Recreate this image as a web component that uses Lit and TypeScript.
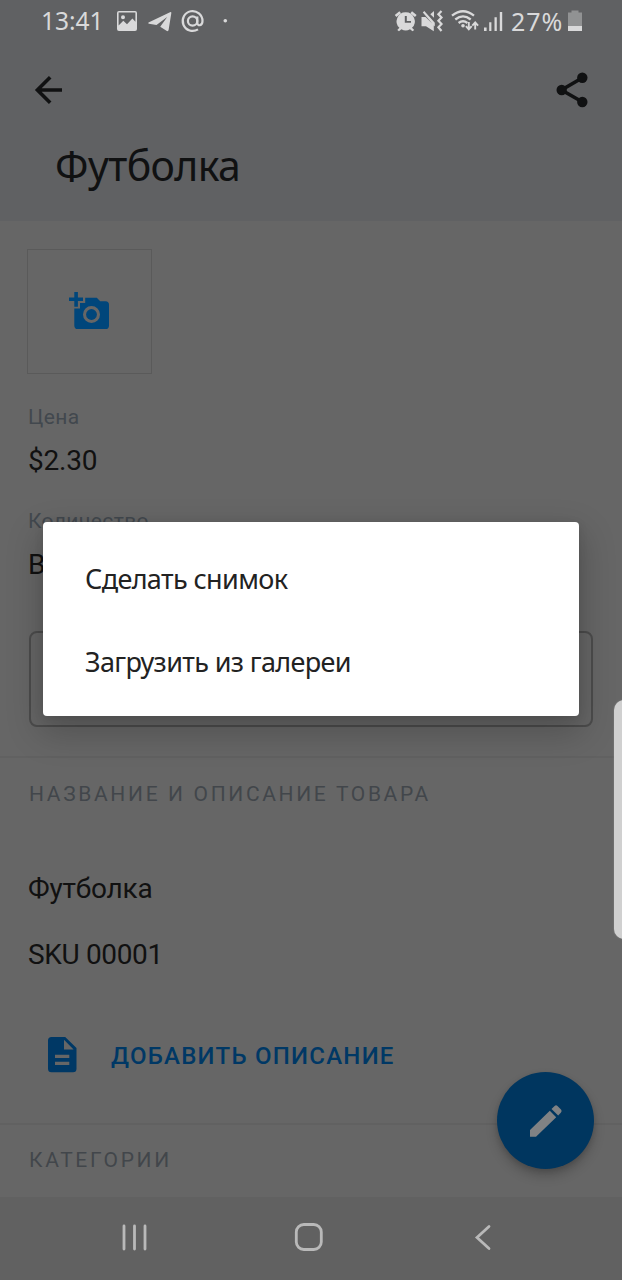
import { LitElement, html, css } from "lit";
import { customElement } from "lit/decorators.js";

@customElement("status-bar")
class StatusBar extends LitElement {
  static styles = css`
    :host { display: block; height: 44px; color: #d9d9da; }
    .bar { display: flex; justify-content: space-between; height: 44px; }
    .side { display: flex; align-items: center; height: 44px; }
    .left { padding-left: 41px; }
    .right { padding-right: 38px; }
    .time, .pct { font: 24.5px/42px "Noto Sans", sans-serif; height: 44px; white-space: nowrap; }
    .time { width: 75px; letter-spacing: 0; }
    .pct { width: 56px; font-size: 25px; letter-spacing: .9px; }
    svg { display: block; fill: currentColor; }
  `;
  render() {
    return html`
      <div class="bar">
        <div class="side left">
          <span class="time">13:41</span>
          <svg width="116" height="44" viewBox="116 0 116 44">
            <path fill-rule="evenodd" d="M119 11H135a2 2 0 0 1 2 2V29a2 2 0 0 1-2 2H119a2 2 0 0 1-2-2V13a2 2 0 0 1 2-2ZM118.6 12.6V25.5L123.3 20.8L127 24.2L132.4 18.6L135.4 21.7V12.6ZM123 15.3a2 2 0 1 1 0 4a2 2 0 0 1 0-4Z"/>
            <path d="M148.5 22.5L170 12.2Q171.6 11.6 171.3 13.2L168.6 30Q168.2 31.8 166.5 30.8L160.2 26.8L167.2 17L156.5 25L149 23.8Q147.6 23.2 148.5 22.5Z"/>
            <g fill="none" stroke="currentColor" stroke-width="2.2">
              <circle cx="192.6" cy="21" r="4.7"/>
              <path d="M197.3 16.5V22.4C197.3 26.7 202.5 26 202.5 21A9.9 9.9 0 1 0 198 29.3"/>
            </g>
            <circle cx="225.3" cy="20.8" r="1.8"/>
          </svg>
        </div>
        <div class="side right">
          <svg width="117" height="44" viewBox="394 0 117 44">
            <path fill-rule="evenodd" d="M405.7 12.3A9 9 0 0 1 412 27.8L414.2 30L412.5 31.3L410 29.3A9 9 0 0 1 401.4 29.3L399 31.3L397.3 30L399.4 27.8A9 9 0 0 1 405.7 12.3ZM404.8 16V22.8H411V20.9H406.8V16Z"/>
            <path d="M395.6 16L400.2 12.2M415.8 16L411.2 12.2" stroke="currentColor" stroke-width="2.6"/>
            <path d="M421.5 17H425.5L433.8 25V31.3L426 26.3H421.5ZM422.8 12.4L424.3 11L434.8 22.8V26.5ZM430.3 14.3L434 11V17.8Z"/>
            <path d="M441.5 11L438.4 14.2L441.5 17.4L438.4 20.7L441.5 24L438.4 27.2L441.5 31" fill="none" stroke="currentColor" stroke-width="2.2"/>
            <g fill="none" stroke="currentColor" stroke-width="2.3">
              <path d="M452 15.7Q463 6.8 474 15.7M455.3 19.5Q463 13.2 470.7 19.5M458.6 23Q463 19.5 467.4 23"/>
            </g>
            <circle cx="463" cy="25.7" r="1.8"/>
            <path d="M468.8 22V29M465.9 26.2L468.8 29.4L471.7 26.2M475.2 29.5V23M472.3 25.6L475.2 22.4L478.1 25.6" fill="none" stroke="currentColor" stroke-width="1.9"/>
            <path d="M484 27.5h2.6V31H484ZM489.2 22.3h2.2V31h-2.2ZM494.5 17.2h2.3V31h-2.3ZM499.8 12h2.4V31h-2.4Z"/>
          </svg>
          <span class="pct">27%</span>
          <svg width="17" height="44" viewBox="567 0 17 44">
            <path d="M571.5 10.5h7v2H582V31H568V12.5h3.5Z" fill="#919293"/>
            <rect x="568" y="26" width="14" height="5"/>
          </svg>
        </div>
      </div>`;
  }
}

@customElement("product-header")
class ProductHeader extends LitElement {
  static styles = css`
    :host { display: block; height: 177px; color: #101112; }
    .tools { display: flex; justify-content: space-between; padding: 22px 32px 0 34px; height: 48px; }
    .title { margin: 0; padding: 23px 0 0 55px; font: 400 41px/56px "Noto Sans", sans-serif; letter-spacing: -0.6px; white-space: nowrap; }
    svg { display: block; }
  `;
  render() {
    return html`
      <div class="tools">
        <svg width="30" height="48" viewBox="34 66 30 48" fill="none" stroke="currentColor" stroke-width="3.6">
          <path d="M62 90H37.5M50.2 77.2L37.4 90L50.2 102.8"/>
        </svg>
        <svg width="36" height="48" viewBox="554 66 36 48" fill="currentColor">
          <path d="M582.5 77.8L561.5 90L582.5 102" fill="none" stroke="currentColor" stroke-width="3.6"/>
          <circle cx="582.3" cy="77.8" r="5.2"/><circle cx="561.7" cy="90" r="5.2"/><circle cx="582.3" cy="102" r="5.2"/>
        </svg>
      </div>
      <h1 class="title">Футболка</h1>`;
  }
}

@customElement("photo-dialog")
class PhotoDialog extends LitElement {
  static styles = css`
    :host {
      display: block; box-sizing: border-box; width: 536px; height: 194px; padding: 15px 42px;
      background: #fff; border-radius: 4px; color: #222;
      box-shadow: 0 14px 34px 4px rgba(0,0,0,.2), 0 2px 10px rgba(0,0,0,.1);
    }
    .item { font: 27px/83px "Noto Sans", sans-serif; letter-spacing: -0.63px; white-space: nowrap; }
  `;
  render() {
    return html`<div class="item">Сделать снимок</div><div class="item">Загрузить из галереи</div>`;
  }
}

@customElement("app-root")
class AppRoot extends LitElement {
  static styles = css`
    :host {
      display: block; position: relative; width: 622px; height: 1280px; overflow: hidden;
      background: #666; color: #111; font: 28px/40px Roboto, sans-serif;
    }
    .top { background: #606163; height: 221px; }
    .content { height: 976px; overflow: hidden; }
    .photo {
      display: flex; align-items: center; justify-content: center; box-sizing: border-box;
      width: 125px; height: 125px; margin: 28px 0 0 27px; border: 1px solid #5a5a5a;
    }
    .field { padding-left: 28px; white-space: nowrap; }
    .label { font-size: 21px; line-height: 28px; color: #42484e; letter-spacing: .4px; }
    .price { padding-top: 29px; }
    .qty { padding-top: 26px; }
    .value { padding-top: 10px; line-height: 40px; letter-spacing: -.2px; }
    .input { box-sizing: border-box; width: 564px; height: 96px; margin: 46px 0 0 29px; border: 2px solid #4c4c4c; border-radius: 8px; }
    .section { border-top: 2px solid #616161; padding: 22px 0 0 29px; font-size: 21px; line-height: 28px; letter-spacing: 2.65px; color: #42464b; white-space: nowrap; }
    .about { margin-top: 29px; }
    .name { padding: 61px 0 0 28px; letter-spacing: -.2px; }
    .sku { padding: 26px 0 0 28px; letter-spacing: -.35px; }
    .add { display: flex; align-items: center; height: 40px; padding: 60px 0 0 48px; gap: 34px; color: #003865; font-size: 24px; font-weight: 500; letter-spacing: 1.25px; white-space: nowrap; }
    .add span { padding-top: 2px; }
    .cats { margin-top: 48px; padding-top: 21px; }
    .nav { display: flex; height: 83px; background: #616161; }
    svg { display: block; }
    .fab {
      position: absolute; left: 497px; top: 1072px; width: 97px; height: 97px; border-radius: 50%;
      background: #00365f; box-shadow: 0 7px 12px rgba(0,0,0,.2), 0 2px 5px rgba(0,0,0,.12);
    }
    .dialog { position: absolute; left: 43px; top: 522px; }
    .edge { position: absolute; left: 614px; top: 700px; width: 20px; height: 239px; border-radius: 10px; background: #d0d0d0; box-shadow: 0 0 2px #888; }
  `;
  render() {
    return html`
      <div class="top"><status-bar></status-bar><product-header></product-header></div>
      <main class="content">
        <div class="photo">
          <svg width="43" height="41" viewBox="68 291 43 41" fill="#00467b">
            <path fill-rule="evenodd" d="M74.3 308.5H80V303H85.2V297.7H96.8L100.2 301.2H105.5Q109 301.2 109 304.7V325.4Q109 329 105.5 329H77.8Q74.3 329 74.3 325.4ZM91.5 306a8.5 8.5 0 1 0 0 17a8.5 8.5 0 0 0 0-17Z"/>
            <circle cx="91.5" cy="314.5" r="5.4"/>
            <path d="M74.3 292h3.6v5.6H83v3.5h-5.1v5.7h-3.6v-5.7H69v-3.5h5.3Z"/>
          </svg>
        </div>
        <div class="field price"><div class="label">Цена</div><div class="value">$2.30</div></div>
        <div class="field qty"><div class="label">Количество</div><div class="value">В</div></div>
        <div class="input"></div>
        <div class="section about">НАЗВАНИЕ И ОПИСАНИЕ ТОВАРА</div>
        <div class="name">Футболка</div>
        <div class="sku">SKU 00001</div>
        <div class="add">
          <svg width="29" height="36" viewBox="0 0 29 36">
            <path fill="#003865" fill-rule="evenodd" d="M3.5 0H17.2L28.5 11V31.7Q28.5 35.2 25 35.2H3.5Q0 35.2 0 31.7V3.5Q0 0 3.5 0ZM16 2.8V12.4H25.6ZM7 17.7V21H21.3V17.7ZM7 24.8V28H21.3V24.8Z"/>
          </svg>
          <span>ДОБАВИТЬ ОПИСАНИЕ</span>
        </div>
        <div class="section cats">КАТЕГОРИИ</div>
      </main>
      <nav class="nav">
        <svg width="622" height="83" viewBox="0 1197 622 83" fill="none" stroke="#b9b9b9" stroke-width="2.8" stroke-linecap="round">
          <path d="M124 1226V1249M134.5 1226V1249M145 1226V1249"/>
          <rect x="296.3" y="1224.5" width="25" height="25" rx="7.5"/>
          <path d="M489 1226.5L477 1237.5L489 1248.5"/>
        </svg>
      </nav>
      <div class="fab">
        <svg width="97" height="97" viewBox="497 1072 97 97" fill="#808284">
          <path d="M530 1130L549.8 1110.8L556.2 1117.2L536 1136.7H530ZM551.5 1109L554.6 1105.9Q556 1104.6 557.5 1105.9L561 1109.6Q562.3 1111 561 1112.5L558.2 1115.4Z"/>
        </svg>
      </div>
      <div class="edge"></div>
      <photo-dialog class="dialog"></photo-dialog>`;
  }
}
